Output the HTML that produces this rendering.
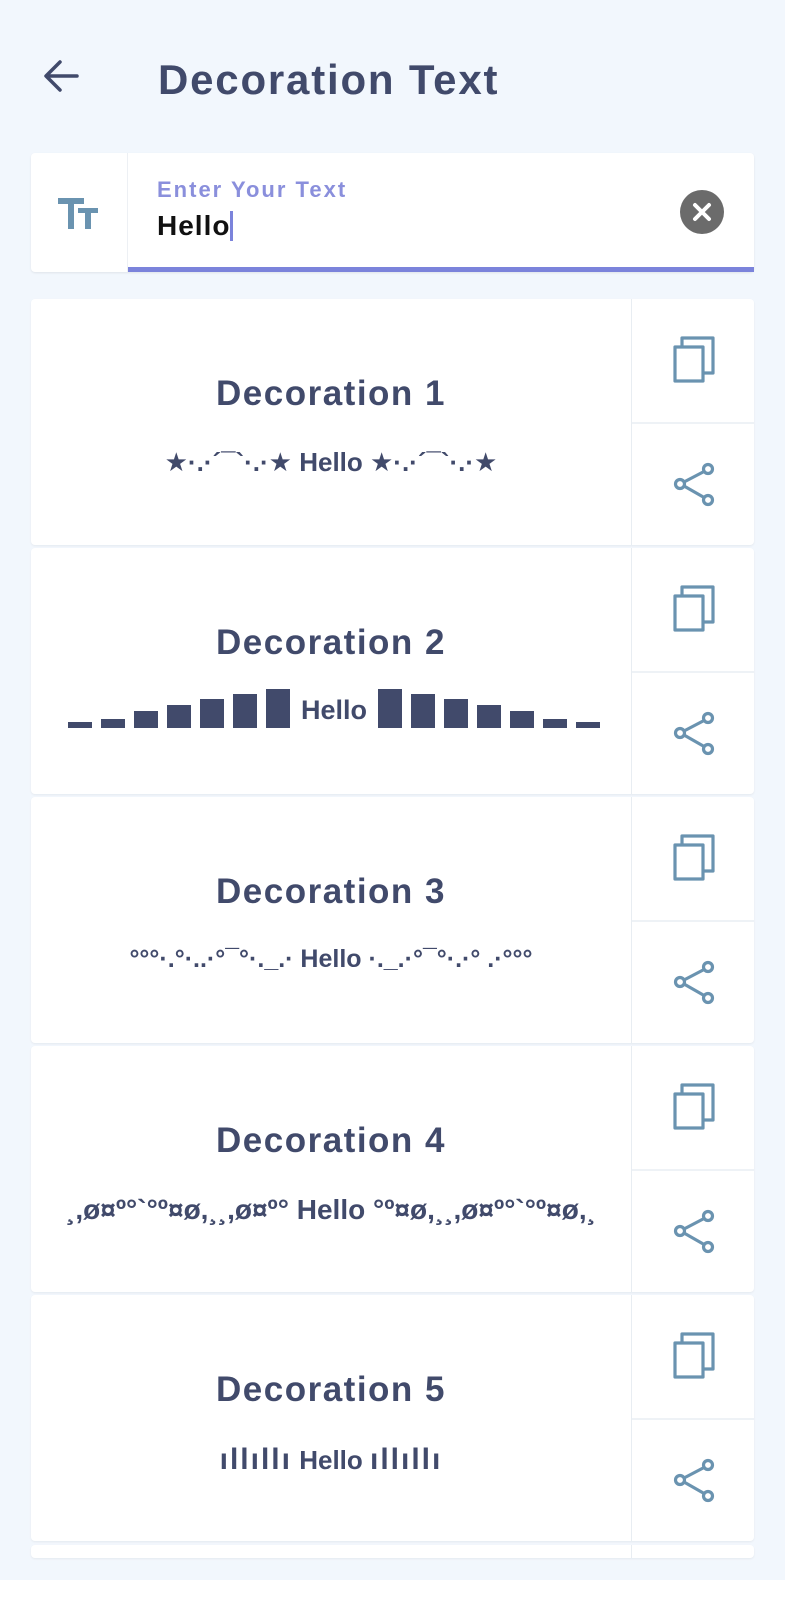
<!DOCTYPE html>
<html><head><meta charset="utf-8"><style>
*{margin:0;padding:0;box-sizing:border-box}
body{width:785px;height:1600px;background:#fff;font-family:"Liberation Sans","DejaVu Sans",sans-serif;position:relative;overflow:hidden}
.bg{position:absolute;left:0;top:0;width:785px;height:1580px;background:#f2f7fd}
.abs{position:absolute}
.title{left:158px;top:56px;font-size:42px;font-weight:bold;color:#414a6b;letter-spacing:1.8px}
.inp{left:31px;top:153px;width:723px;height:119px;background:#fff;border-radius:4px;box-shadow:0 1px 2px rgba(0,0,0,.08)}
.card{position:absolute;left:31px;width:723px;height:246px;background:#fff;border-radius:4px;box-shadow:0 1px 2px rgba(0,0,0,.06)}
.card .rc{position:absolute;left:600px;top:0;width:1px;height:100%;background:#e8edf2}
.card .hd{position:absolute;left:601px;top:123px;width:122px;height:2px;background:#eef2f6}
.card .t{position:absolute;left:0;width:600px;top:75px;text-align:center;font-size:35px;font-weight:bold;color:#414a6b;letter-spacing:1.5px}
.card .d{position:absolute;left:0;width:600px;top:148px;text-align:center;font-size:26px;font-weight:bold;color:#414a6b;white-space:nowrap}
.card svg{position:absolute;left:630px}
</style></head><body>
<div class="bg"></div>
<svg class="abs" style="left:40px;top:55px" width="42" height="42" viewBox="0 0 42 42"><path d="M37 21H8M20 7L6 21l14 14" fill="none" stroke="#414a6b" stroke-width="3.5" stroke-linecap="round" stroke-linejoin="round"/></svg>
<div class="abs title">Decoration Text</div>
<div class="abs inp">
 <div class="abs" style="left:96px;top:0;width:1px;height:119px;background:#edf0f4"></div>
 <svg class="abs" style="left:25px;top:42px" width="44" height="36" viewBox="0 0 44 36"><path d="M2 3h26v6H18v25h-6V9H2z" fill="#6a93b0"/><path d="M22 13h20v5h-7v16h-6V18h-7z" fill="#6a93b0"/></svg>
 <div class="abs" style="left:126px;top:24px;font-size:22px;font-weight:bold;color:#8a8fdc;letter-spacing:2px">Enter Your Text</div>
 <div class="abs" style="left:126px;top:57px;font-size:28px;font-weight:bold;color:#111;letter-spacing:1px">Hello<span style="display:inline-block;width:3px;height:30px;background:#7b83db;vertical-align:-6px"></span></div>
 <div class="abs" style="left:649px;top:37px;width:44px;height:44px;border-radius:50%;background:#6b6b6b"><svg width="44" height="44" viewBox="0 0 44 44"><path d="M15 15l14 14M29 15L15 29" stroke="#fff" stroke-width="4" stroke-linecap="round"/></svg></div>
 <div class="abs" style="left:97px;top:114px;width:626px;height:5px;background:#7b83db"></div>
</div>

<div class="card" style="top:299px">
 <div class="rc"></div><div class="hd"></div>
 <div class="t">Decoration 1</div>
 <div class="d">★·.·´¯`·.·★ Hello ★·.·´¯`·.·★</div>
</div>
<div class="card" style="top:548px">
 <div class="rc"></div><div class="hd"></div>
 <div class="t">Decoration 2</div>
 <div class="abs" style="left:37px;top:141px;height:40px;width:530px;white-space:nowrap;font-size:0">
  <span style="display:inline-block;vertical-align:bottom;width:24px;height:6px;background:#414a6b;margin-right:9px"></span><span style="display:inline-block;vertical-align:bottom;width:24px;height:9px;background:#414a6b;margin-right:9px"></span><span style="display:inline-block;vertical-align:bottom;width:24px;height:17px;background:#414a6b;margin-right:9px"></span><span style="display:inline-block;vertical-align:bottom;width:24px;height:23px;background:#414a6b;margin-right:9px"></span><span style="display:inline-block;vertical-align:bottom;width:24px;height:29px;background:#414a6b;margin-right:9px"></span><span style="display:inline-block;vertical-align:bottom;width:24px;height:34px;background:#414a6b;margin-right:9px"></span><span style="display:inline-block;vertical-align:bottom;width:24px;height:39px;background:#414a6b;margin-right:4px"></span><span style="display:inline-block;vertical-align:bottom;font-size:27px;font-weight:bold;color:#414a6b;line-height:30px;width:80px;text-align:center;margin-bottom:3px">Hello</span><span style="display:inline-block;vertical-align:bottom;width:24px;height:39px;background:#414a6b;margin-left:4px;margin-right:9px"></span><span style="display:inline-block;vertical-align:bottom;width:24px;height:34px;background:#414a6b;margin-right:9px"></span><span style="display:inline-block;vertical-align:bottom;width:24px;height:29px;background:#414a6b;margin-right:9px"></span><span style="display:inline-block;vertical-align:bottom;width:24px;height:23px;background:#414a6b;margin-right:9px"></span><span style="display:inline-block;vertical-align:bottom;width:24px;height:17px;background:#414a6b;margin-right:9px"></span><span style="display:inline-block;vertical-align:bottom;width:24px;height:9px;background:#414a6b;margin-right:9px"></span><span style="display:inline-block;vertical-align:bottom;width:24px;height:6px;background:#414a6b"></span>
 </div>
</div>
<div class="card" style="top:797px">
 <div class="rc"></div><div class="hd"></div>
 <div class="t">Decoration 3</div>
 <div class="d" style="font-size:25px">°°°·.°·..·°¯°·._.· Hello ·._.·°¯°·.·° .·°°°</div>
</div>
<div class="card" style="top:1046px">
 <div class="rc"></div><div class="hd"></div>
 <div class="t">Decoration 4</div>
 <div class="d" style="font-size:28px">¸,ø¤º°`°º¤ø,¸¸,ø¤º° Hello °º¤ø,¸¸,ø¤º°`°º¤ø,¸</div>
</div>
<div class="card" style="top:1295px">
 <div class="rc"></div><div class="hd"></div>
 <div class="t">Decoration 5</div>
 <div class="d"><span style="letter-spacing:2px;font-size:30px">ıllıllı</span> Hello <span style="letter-spacing:2px;font-size:30px">ıllıllı</span></div>
</div>
<div class="card" style="top:1545px;height:13px"><div class="rc"></div></div>

<svg class="abs" style="left:0;top:0" width="785" height="1600">
 <defs>
  <g id="cp" fill="none" stroke="#6a93b0" stroke-width="3.2" stroke-linejoin="round">
   <path d="M682 346v-8h31v35h-9"/>
   <rect x="675" y="347" width="28" height="34"/>
  </g>
  <g id="sh" fill="none" stroke="#6a93b0" stroke-width="3.2">
   <path d="M684 482l21-11M684 486l21 12"/>
   <circle cx="708" cy="469" r="4.5"/><circle cx="680" cy="484" r="4.5"/><circle cx="708" cy="500" r="4.5"/>
  </g>
 </defs>
 <use href="#cp"/><use href="#sh"/>
 <use href="#cp" y="249"/><use href="#sh" y="249"/>
 <use href="#cp" y="498"/><use href="#sh" y="498"/>
 <use href="#cp" y="747"/><use href="#sh" y="747"/>
 <use href="#cp" y="996"/><use href="#sh" y="996"/>
</svg>
</body></html>
